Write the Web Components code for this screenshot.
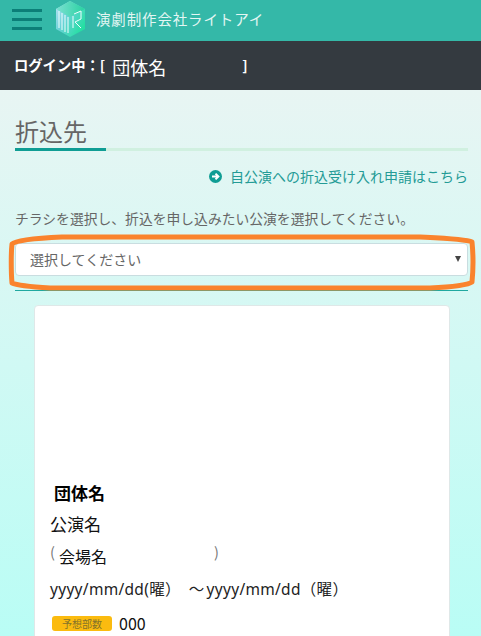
<!DOCTYPE html>
<html lang="ja"><head><meta charset="utf-8"><style>
html,body{margin:0;padding:0;height:636px;overflow:hidden}
body{font-family:"Noto Sans CJK JP","Noto Sans",sans-serif;background:linear-gradient(180deg,#e8f5f3 90px,#b9fdf5 636px);color:#555}
</style></head><body>
<app-header>演劇制作会社ライトアイ</app-header>
<login-bar name="団体名"></login-bar>
<main-area>
  <page-title>折込先</page-title>
  <info-link>自公演への折込受け入れ申請はこちら</info-link>
  <select-field label="チラシを選択し、折込を申し込みたい公演を選択してください。" value="選択してください"></select-field>
  <show-card></show-card>
</main-area>
<script>
function def(name,html){customElements.define(name,class extends HTMLElement{constructor(){super();const r=this.attachShadow({mode:'open'});r.innerHTML=html;}connectedCallback(){const r=this.shadowRoot;r.querySelectorAll('[data-attr]').forEach(e=>{e.textContent=this.getAttribute(e.dataset.attr)||''})}})}
def('app-header',`<style>
:host{display:flex;align-items:center;height:41px;background:#34b8a8;box-sizing:border-box;padding-left:12px}
.b{display:flex;flex-direction:column;gap:5.7px;width:30px;margin-top:-2px}
.b i{display:block;height:3.3px;background:#0c7f78}
svg{margin-left:12px;margin-top:-3px;flex:none}
.t{margin-left:9px;color:#e3f6f3;font-size:14.5px;letter-spacing:.85px;margin-top:-4px;white-space:nowrap}
</style><div class="b"><i></i><i></i><i></i></div>
<svg width="33" height="38" viewBox="0 0 33 38"><defs><linearGradient id="g" x1="0" y1="0" x2="1" y2=".7"><stop offset="0" stop-color="#bfe2f8"/><stop offset=".45" stop-color="#68d2d6"/><stop offset="1" stop-color="#22e0a0"/></linearGradient><linearGradient id="h" x1="0" y1="0" x2="1" y2="0"><stop offset="0" stop-color="#7ce0d2"/><stop offset="1" stop-color="#28d2a0"/></linearGradient></defs>
<path d="M16 1 31 9V29L16 37 2 29V9Z" fill="url(#g)"/><path d="M16 1 31 9 16 17 2 9Z" fill="url(#h)"/>
<g fill="none" stroke="#f0fdff" stroke-width="1"><path d="M5 11V28M8 13V30M11 15V32"/><path d="M14 17V33M19 16V28"/><path d="M20 14 27 11V19L21 22 27 28"/></g></svg>
<span class="t"><slot></slot></span>`);
def('login-bar',`<style>
:host{display:flex;align-items:center;height:49px;background:#343a40;color:#fff;padding-left:14px;box-sizing:border-box}
b{font-size:14.3px;font-weight:700;white-space:nowrap;margin-top:-3px}
span{font-size:18px;width:130px;margin-left:7px;margin-top:2px;color:#fff;font-weight:400;white-space:nowrap}
</style><b>ログイン中：[</b><span data-attr="name"></span><b>]</b>`);
def('main-area',`<style>:host{display:block;padding:28px 13px 0 15px}</style><slot></slot>`);
def('page-title',`<style>
:host{display:block;font-size:24px;color:#666;font-weight:400}
span{display:block;height:30px;line-height:26px}
div{height:3px;background:linear-gradient(90deg,#0f9d94 91px,#d0f0e0 91px)}
</style><span><slot></slot></span><div></div>`);
def('info-link',`<style>
:host{display:flex;justify-content:flex-end;align-items:center;gap:8px;margin-top:14px;height:22px;font-size:14px;color:#249b96;white-space:nowrap}
svg{flex:none}
</style><svg width="13" height="13" viewBox="0 0 13 13"><circle cx="6.5" cy="6.5" r="6.5" fill="#0f9d94"/><path d="M3 6.5H9M6.5 3.6 9.4 6.5 6.5 9.4" fill="none" stroke="#fff" stroke-width="2"/></svg><span><slot></slot></span>`);
def('select-field',`<style>
:host{display:block;position:relative;margin-top:21px}
.l{font-size:13.8px;line-height:20px;color:#666;white-space:nowrap}
.s{display:flex;align-items:center;justify-content:space-between;box-sizing:border-box;height:33px;margin-top:15px;background:#fff;border:1px solid #c9dde0;border-radius:4px;padding:0 6px 2px 14px;font-size:14px;color:#666}
.a{width:0;height:0;border:3.5px solid transparent;border-top:6px solid #444;border-bottom:0}
.r{height:1px;background:#20a8a0;margin-top:14px}
svg{position:absolute;left:-15px;top:14px;pointer-events:none}
</style><div class="l" data-attr="label"></div><div class="s"><span data-attr="value"></span><i class="a"></i></div><div class="r"></div>
<svg width="481" height="80" viewBox="0 0 481 80"><path d="M62 15C40 16 16 18 12 22 11 30 11 50 12 61 16 63 34 65 50 66H430C450 65 468 63 472 60 473 50 473 30 472 20 466 17 440 16 420 15Z" fill="none" stroke="#fa832d" stroke-width="5" stroke-linejoin="round"/></svg>`);
def('show-card',`<style>
:host{display:block;box-sizing:border-box;margin:14px 18px 0 19px;height:340px;background:#fff;border:1px solid #dfe8e8;border-radius:4px;padding:171px 0 0 15px;color:#111;white-space:nowrap}
.o{font-weight:700;font-size:17px;line-height:32px;height:32px;margin-left:4px;color:#000}
.v{font-size:17px;line-height:30px;height:30px;color:#111}
.p{display:flex;height:36px;font-size:14.5px;color:#777;align-items:flex-start;padding-top:2px;box-sizing:border-box}
.p b{font-weight:400;font-size:16px;color:#111;width:155px;margin-top:3px;margin-left:4px}
.d{font-family:"Noto Sans","Noto Sans CJK JP",sans-serif;font-size:15.5px;line-height:28px;height:37px;color:#222;letter-spacing:.3px}
.d i{font-style:normal;margin:0 2px 0 8px}
.m{display:flex;align-items:center;gap:7px;font-size:16px;height:22px;margin-left:2px}
.g{display:flex;align-items:center;justify-content:center;width:60px;height:15px;background:#fbbb0f;border-radius:3px;font-size:10px;color:#84732a}
</style><div class="o">団体名</div><div class="v">公演名</div>
<div class="p"><span>(</span><b>会場名</b><span>)</span></div>
<div class="d">yyyy/mm/dd(曜）<i>～</i>yyyy/mm/dd（曜）</div>
<div class="m"><span class="g">予想部数</span><span>000</span></div>`);
</script>
</body></html>
